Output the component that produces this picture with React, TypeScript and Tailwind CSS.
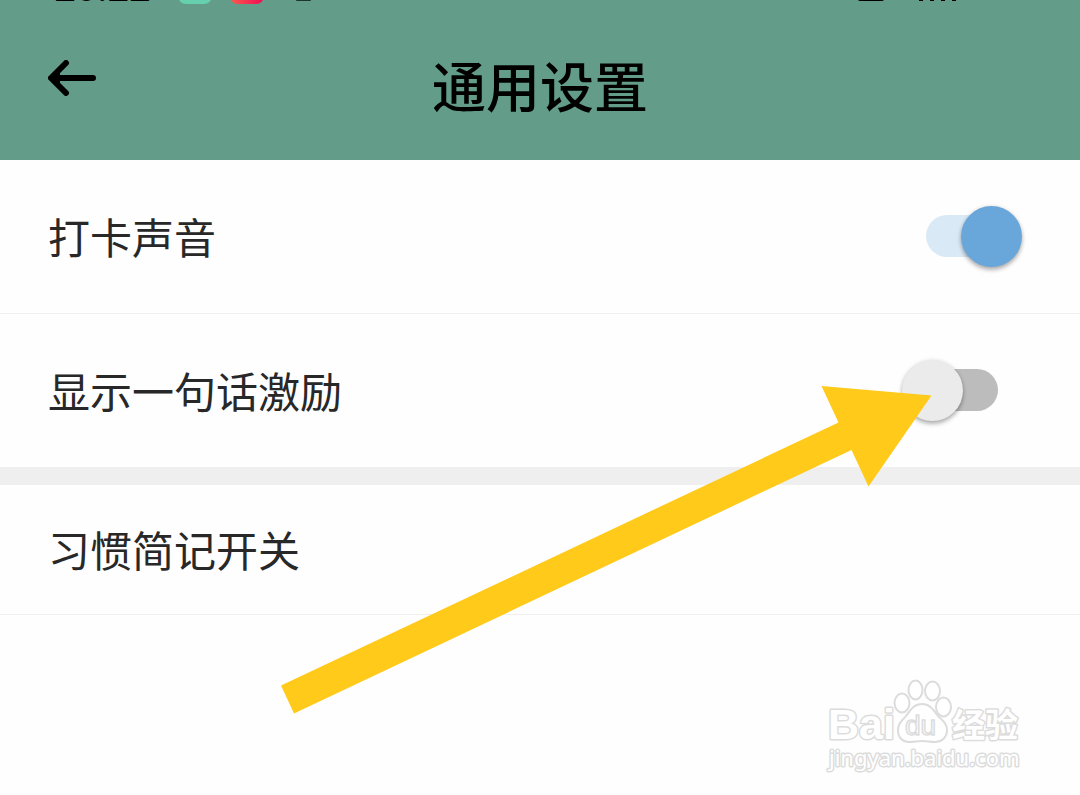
import { useState } from "react";

function StatusBar() {
  return (
    <div className="flex h-2 items-end overflow-hidden pl-[54px] pr-30">
      <span className="w-30 shrink-0 font-['Roboto','Noto_Sans_CJK_SC',sans-serif] text-[38px] leading-10 font-medium">
        20:22
      </span>
      <svg className="mb-1 h-8 w-[140px] shrink-0" viewBox="0 0 140 32" aria-hidden="true">
        <defs>
          <linearGradient id="app-red" x1="0" x2="1">
            <stop offset="0" stopColor="#ff5a4d" />
            <stop offset="1" stopColor="#ee0a55" />
          </linearGradient>
        </defs>
        <rect x="4" y="-2" width="34" height="34" rx="8" fill="#66cfad" />
        <rect x="56" y="-2" width="34" height="34" rx="8" fill="url(#app-red)" />
        <rect x="122" y="10" width="15" height="19" rx="1" fill="#1d352d" />
      </svg>
      <svg className="mb-1 ml-auto h-8 w-[104px] shrink-0" viewBox="0 0 104 32" aria-hidden="true">
        <rect x="2" y="4" width="26" height="25" rx="2" />
        <path d="M63 20h4v9h-4zM74 15h4v14h-4zM85 10h4v19h-4zM96 5h4v24h-4z" />
      </svg>
    </div>
  );
}

function Header() {
  return (
    <header className="bg-[#639c88] text-black">
      <StatusBar />
      <div className="grid h-38 grid-cols-[1fr_auto_1fr] items-start px-12 pt-12">
        <button type="button" aria-label="返回" className="mt-1 w-12">
          <svg className="h-9 w-12" viewBox="0 0 48 36" fill="none" stroke="currentColor" strokeWidth="6" strokeLinecap="round" strokeLinejoin="round">
            <path d="M18 3 3 18l15 15M4 18h41" />
            <path d="M4 18l7-6v12z" fill="currentColor" strokeWidth="2" />
          </svg>
        </button>
        <h1 className="text-[54px] leading-[58px] font-medium">通用设置</h1>
      </div>
    </header>
  );
}

function ToggleRow({ id, label, initial }: { id: string; label: string; initial: boolean }) {
  const [on, setOn] = useState(initial);
  return (
    <div className="flex h-[153px] items-center justify-between pr-[58px] pl-12">
      <label htmlFor={id} className="pb-0.5 text-[42px] leading-15">
        {label}
      </label>
      <input
        id={id}
        type="checkbox"
        role="switch"
        checked={on}
        onChange={(e) => setOn(e.target.checked)}
        className="relative h-[61px] w-30 shrink-0 cursor-pointer appearance-none before:absolute before:inset-x-6 before:top-[9px] before:h-[42px] before:rounded-full before:bg-[#bcbcbc] after:absolute after:top-0 after:left-0 after:size-[61px] after:rounded-full after:bg-[#ebebeb] after:shadow-[0_3px_4px_rgba(0,0,0,0.28),0_0_4px_rgba(0,0,0,0.1)] checked:before:bg-[#d9e9f6] checked:after:left-[59px] checked:after:bg-[#69a6da]"
      />
    </div>
  );
}

function PointerArrow() {
  return (
    <svg className="pointer-events-none absolute top-[386px] left-[281px] h-[328px] w-[651px]" viewBox="281 386 651 328" aria-hidden="true">
      <path d="M281 685.5 838.5 422.5 821.5 386 931.5 395.5 868.5 486.5 851.5 450 294 713.5Z" fill="#ffca1a" />
    </svg>
  );
}

function Watermark() {
  return (
    <svg
      className="pointer-events-none absolute top-[670px] right-[50px] h-[110px] w-[210px]"
      viewBox="820 670 210 110"
      fill="#fff"
      stroke="#dcdcdc"
      strokeWidth="2"
      strokeLinejoin="round"
      role="img"
      aria-label="Baidu 经验"
    >
      <text x="828" y="739" fontSize="43" style={{ paintOrder: "stroke" }} strokeWidth="3" className="font-['Liberation_Sans',sans-serif] font-bold">Bai</text>
      <ellipse cx="902" cy="703" rx="7.5" ry="9.5" />
      <ellipse cx="915.5" cy="690" rx="7" ry="9.5" />
      <ellipse cx="932.5" cy="691" rx="7.5" ry="9.5" />
      <ellipse cx="943.5" cy="707" rx="7.5" ry="9.5" />
      <path d="M922 704c9 0 12 7 16 12 4 4 9 7 9 14 0 8-6 12-12 12-5 0-8-1-13-1s-8 1-13 1c-6 0-11-4-11-12s5-10 8-14c4-5 7-12 16-12Z" />
      <text x="905" y="735" fontSize="28" strokeWidth="1.5" className="font-['Liberation_Sans',sans-serif]">du</text>
      <text x="952" y="737" fontSize="33" style={{ paintOrder: "stroke" }} strokeWidth="3" className="font-['Noto_Sans_CJK_SC',sans-serif] font-bold">经验</text>
      <text x="829" y="766" fontSize="22" style={{ paintOrder: "stroke" }} strokeWidth="3" className="font-['Noto_Sans','Open_Sans',sans-serif]">jingyan.baidu.com</text>
    </svg>
  );
}

export default function App() {
  return (
    <div className="relative min-h-screen overflow-hidden bg-[#fefefe] font-['Noto_Sans_CJK_SC',sans-serif] text-[#282828]">
      <Header />
      <main>
        <ToggleRow id="sound" label="打卡声音" initial={true} />
        <div className="border-t border-[#efefef]">
          <ToggleRow id="quote" label="显示一句话激励" initial={false} />
        </div>
        <div className="h-[18px] bg-[#efefef]" />
        <button type="button" className="flex h-[130px] w-full items-center border-b border-[#efefef] pb-0.5 pl-12 text-left text-[42px] leading-15">
          习惯简记开关
        </button>
      </main>
      <PointerArrow />
      <Watermark />
    </div>
  );
}
